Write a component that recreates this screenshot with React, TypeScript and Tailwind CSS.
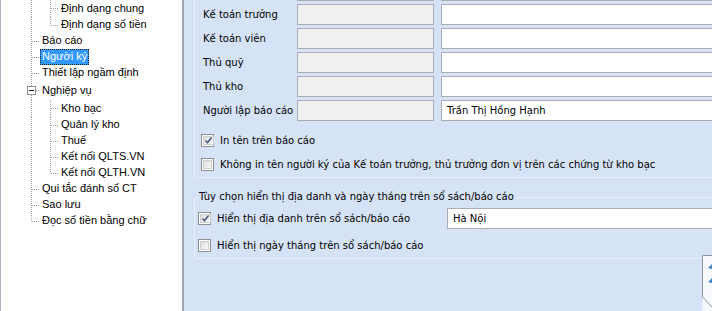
import React from "react";

type TreeRow = {
  label: string;
  level: 1 | 2;
  h: number;
  last?: boolean;
  expander?: boolean;
  selected?: boolean;
};

const treeRows: TreeRow[] = [
  { label: "Định dạng chung", level: 2, h: 17 },
  { label: "Định dạng số tiền", level: 2, h: 16, last: true },
  { label: "Báo cáo", level: 1, h: 16 },
  { label: "Người ký", level: 1, h: 16, selected: true },
  { label: "Thiết lập ngầm định", level: 1, h: 16 },
  { label: "Nghiệp vụ", level: 1, h: 19, expander: true },
  { label: "Kho bạc", level: 2, h: 17 },
  { label: "Quản lý kho", level: 2, h: 16 },
  { label: "Thuế", level: 2, h: 16 },
  { label: "Kết nối QLTS.VN", level: 2, h: 16 },
  { label: "Kết nối QLTH.VN", level: 2, h: 16, last: true },
  { label: "Qui tắc đánh số CT", level: 1, h: 16 },
  { label: "Sao lưu", level: 1, h: 16 },
  { label: "Đọc số tiền bằng chữ", level: 1, h: 16, last: true },
];

// first row is scrolled above the view, only its boxes' bottom edge shows
const signers = [
  { label: "", value: "" },
  { label: "Kế toán trưởng", value: "" },
  { label: "Kế toán viên", value: "" },
  { label: "Thủ quỹ", value: "" },
  { label: "Thủ kho", value: "" },
  { label: "Người lập báo cáo", value: "Trần Thị Hồng Hạnh" },
];

const LINE = "#a0a0a0";

function TreeLines({ row }: { row: TreeRow }) {
  const w = row.level === 1 ? 39 : 58;
  const cy = Math.floor(row.h / 2) + 0.5;
  const l1Last = row.level === 1 && row.last;
  return (
    <svg width={w} height={row.h} className="shrink-0">
      <line x1={30.5} y1={0} x2={30.5} y2={l1Last ? cy : row.h} stroke={LINE} strokeDasharray="1 1" />
      {row.level === 1 && <line x1={31} y1={cy} x2={38} y2={cy} stroke={LINE} strokeDasharray="1 1" />}
      {row.level === 2 && (
        <>
          <line x1={49.5} y1={0} x2={49.5} y2={row.last ? cy : row.h} stroke={LINE} strokeDasharray="1 1" />
          <line x1={50} y1={cy} x2={57} y2={cy} stroke={LINE} strokeDasharray="1 1" />
        </>
      )}
      {row.expander && (
        <>
          <rect x={26.5} y={cy - 4} width={8} height={8} fill="#fff" stroke="#919191" />
          <line x1={28} y1={cy} x2={33} y2={cy} stroke="#1e1e1e" />
        </>
      )}
    </svg>
  );
}

function Tree() {
  return (
    <div className="w-[182px] shrink-0 bg-white border-l border-[#a9b1bc] flex flex-col text-black font-['Liberation_Sans',Arial,sans-serif] text-[11px]">
      {treeRows.map((row) => (
        <div key={row.label} className="flex items-center" style={{ height: row.h }}>
          <TreeLines row={row} />
          <span
            className={
              row.selected
                ? "h-[16px] leading-[15px] px-[2px] bg-[#3399ff] text-white outline-1 outline-dotted outline-[#222] -outline-offset-1 whitespace-nowrap"
                : "h-[16px] leading-[15px] px-[2px] whitespace-nowrap"
            }
          >
            {row.label}
          </span>
        </div>
      ))}
    </div>
  );
}

function Checkbox({ checked }: { checked?: boolean }) {
  return (
    <span className="w-[13px] h-[13px] shrink-0 border border-[#8e8f8f] bg-white p-[1px] flex">
      <span className="flex-1 border border-[#cfcfcf] bg-gradient-to-br from-[#dcdcdc] to-[#fbfbfb] flex items-center justify-center">
        {checked && (
          <svg width="9" height="9" viewBox="0 0 9 9">
            <path d="M1.5 4.5 L3.5 6.8 L7.6 1.5" fill="none" stroke="#4a5a7f" strokeWidth="1.6" />
          </svg>
        )}
      </span>
    </span>
  );
}

function CornerTab() {
  return (
    <div className="absolute right-0 top-[255px] w-[10px] h-[56px]">
      <svg width="10" height="56">
        <path d="M0.5 56 L0.5 0.5 L10 0.5 L10 56 Z" fill="#f7f9fc" />
        <path d="M0.5 0.5 L0.5 42 L10 52" fill="none" stroke="#8f96a0" />
        <path d="M0.5 0.5 L10 0.5" stroke="#8f96a0" />
        <path d="M6 13 L10 9 L10 14 Z" fill="#3e86c9" />
        <path d="M6 27 L10 23 L10 28 Z" fill="#3e86c9" />
      </svg>
    </div>
  );
}

export default function App() {
  return (
    <div className="w-[712px] h-[311px] flex overflow-hidden">
      <Tree />
      <div className="w-[2px] shrink-0 bg-[#9fa6b0]" />

      <div className="relative flex-1 overflow-hidden bg-[#d6e3f7] text-black font-['DejaVu_Sans',Tahoma,sans-serif] text-[10px]">
        <div className="w-[560px]">
          {/* Người ký */}
          <fieldset className="ml-[10px] -mt-[28px] pt-[7px] pb-[3px] pl-[8px] border border-[#eaf0f8] rounded-[3px]">
            <div className="flex flex-col gap-[3px]">
              {signers.map((s, i) => (
                <div key={i} className="flex items-center h-[21px]">
                  <span className="w-[94px] whitespace-nowrap">{s.label}</span>
                  <div className="w-[137px] h-[21px] border border-[#abadb3] bg-[#f0f0f0]" />
                  <div className="ml-[7px] flex-1 h-[21px] border border-[#abadb3] bg-white px-[5px] leading-[19px]">
                    {s.value}
                  </div>
                </div>
              ))}
            </div>
            <div className="mt-[9px] flex flex-col gap-[4px]">
              <label className="h-[20px] flex items-center gap-[6px] -ml-[2px]">
                <Checkbox checked />
                <span>In tên trên báo cáo</span>
              </label>
              <label className="h-[20px] flex items-center gap-[6px] -ml-[2px]">
                <Checkbox />
                <span className="whitespace-nowrap">
                  Không in tên người ký của Kế toán trưởng, thủ trưởng đơn vị trên các chứng từ kho bạc
                </span>
              </label>
            </div>
          </fieldset>

          {/* Tùy chọn hiển thị */}
          <fieldset className="ml-[10px] mt-[11px] pl-[3px] pb-[3px] border border-[#eaf0f8] rounded-[3px]">
            <legend className="px-[1px] leading-[16px]">
              Tùy chọn hiển thị địa danh và ngày tháng trên sổ sách/báo cáo
            </legend>
            <div className="mt-[3px] flex items-center h-[21px]">
              <label className="w-[249px] flex items-center gap-[6px]">
                <Checkbox checked />
                <span>Hiển thị địa danh trên sổ sách/báo cáo</span>
              </label>
              <div className="flex-1 h-[21px] border border-[#abadb3] bg-white px-[5px] leading-[19px]">
                Hà Nội
              </div>
            </div>
            <label className="mt-[6px] h-[20px] flex items-center gap-[6px]">
              <Checkbox />
              <span>Hiển thị ngày tháng trên sổ sách/báo cáo</span>
            </label>
          </fieldset>
        </div>

        <CornerTab />
      </div>
    </div>
  );
}
